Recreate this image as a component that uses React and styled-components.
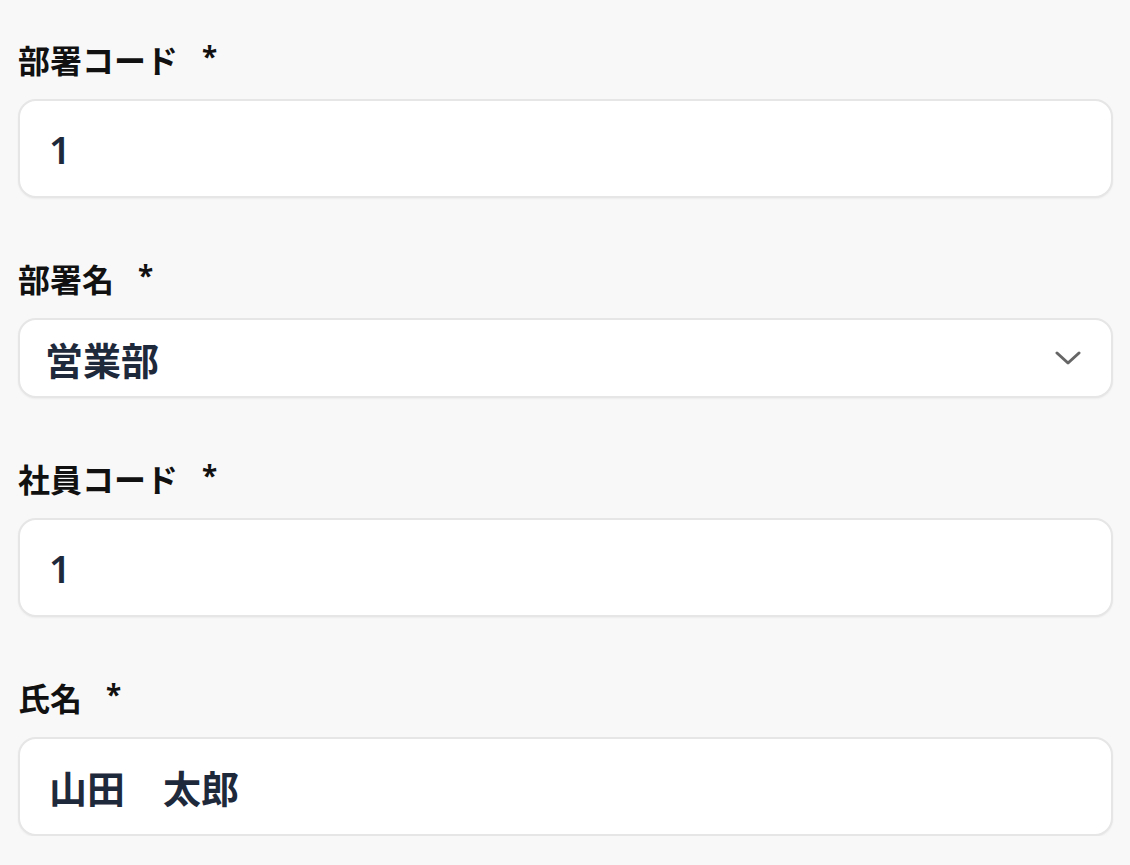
import React from 'react';
import styled, { createGlobalStyle } from 'styled-components';

const GlobalStyle = createGlobalStyle`
  html, body {
    margin: 0;
    background: #f8f8f8;
  }
  body {
    font-family: "Noto Sans", "Noto Sans CJK JP", sans-serif;
  }
`;

const Form = styled.div`
  display: flex;
  flex-direction: column;
  gap: 60px;
  padding: 39px 17px 0 18px;
`;

const Field = styled.div`
  display: flex;
  flex-direction: column;
`;

const Label = styled.label`
  display: flex;
  align-items: center;
  height: 40px;
  margin-bottom: 20px;
  font-size: 32px;
  font-weight: 700;
  color: #111;
`;

const Required = styled.span`
  margin-left: 24px;
  font-size: 28px;
  position: relative;
  top: -3px;
`;

const Box = styled.div`
  display: flex;
  align-items: center;
  justify-content: space-between;
  box-sizing: border-box;
  height: ${p => (p.$select ? '80px' : '99px')};
  padding: 0 30px 0 ${p => (p.$select ? '25px' : '29px')};
  background: #fff;
  border: 2px solid #e6e6e6;
  border-radius: 18px;
  box-shadow: 0 1px 2px rgba(0, 0, 0, 0.05);
  font-size: 38px;
  font-weight: 600;
  color: #1e293b;
`;

const Chevron = () => (
  <svg width="26" height="16" viewBox="0 0 26 16" fill="none">
    <path d="M2 3l11 10 11-10" stroke="#666" strokeWidth="3" strokeLinecap="round" strokeLinejoin="round" />
  </svg>
);

const fields = [
  { label: '部署コード', value: '1' },
  { label: '部署名', value: '営業部', select: true },
  { label: '社員コード', value: '1' },
  { label: '氏名', value: '山田　太郎' },
];

export default function App() {
  return (
    <>
      <GlobalStyle />
      <Form>
        {fields.map(f => (
          <Field key={f.label}>
            <Label>
              {f.label}
              <Required>*</Required>
            </Label>
            <Box $select={f.select}>
              <span>{f.value}</span>
              {f.select && <Chevron />}
            </Box>
          </Field>
        ))}
      </Form>
    </>
  );
}
